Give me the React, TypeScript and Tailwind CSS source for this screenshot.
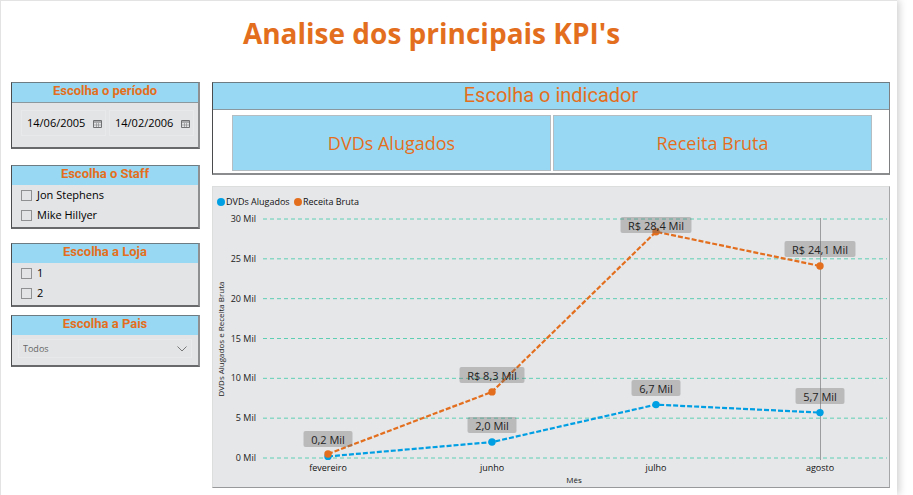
import { useState } from "react";
import type { ReactNode } from "react";

const MONTHS = ["fevereiro", "junho", "julho", "agosto"];
const MONTH_X = [115, 279, 443, 607];
const PLOT = { left: 50, right: 674, top: 32, bottom: 271, max: 30 };

type Label = { text: string; y: number; width: number } | null;
type Series = { name: string; color: string; values: number[]; labels: Label[] };

const SERIES: Series[] = [
  {
    name: "DVDs Alugados",
    color: "#009fe3",
    values: [0.2, 2.0, 6.7, 5.7],
    labels: [
      { text: "0,2 Mil", y: 244, width: 49 },
      { text: "2,0 Mil", y: 230, width: 49 },
      { text: "6,7 Mil", y: 193, width: 49 },
      { text: "5,7 Mil", y: 201, width: 49 },
    ],
  },
  {
    name: "Receita Bruta",
    color: "#e36f1e",
    values: [0.5, 8.3, 28.4, 24.1],
    labels: [
      null,
      { text: "R$ 8,3 Mil", y: 180, width: 65 },
      { text: "R$ 28,4 Mil", y: 30, width: 71 },
      { text: "R$ 24,1 Mil", y: 54, width: 71 },
    ],
  },
];

const TICKS = [0, 5, 10, 15, 20, 25, 30];

function yOf(value: number) {
  return PLOT.bottom - (value / PLOT.max) * (PLOT.bottom - PLOT.top);
}

function Card({ title, ruled, children }: { title: string; ruled?: boolean; children: ReactNode }) {
  return (
    <section className="border-2 border-t border-l border-t-[#6d7c83] border-r-[#8d8f90] border-b-[#68696a] border-l-[#4a4b4c] bg-[#e3e4e5]">
      <h2
        className={`bg-[#99d8f3] text-center font-['Roboto',sans-serif] text-[13px] leading-4 font-bold text-[#e36f1e] ${
          ruled ? "h-5 border-b border-[#8b989e]" : "h-[19px]"
        }`}
      >
        {title}
      </h2>
      {children}
    </section>
  );
}

function CalendarIcon() {
  return (
    <svg viewBox="0 0 9 9" className="size-[9px] shrink-0" fill="none" stroke="#6f7173" aria-hidden="true">
      <path d="M.5 1.5h8v7h-8z" />
      <path d="M0 3h9" />
      <path d="M3.500 4v4M5.500 4v4M1 6h7" strokeWidth=".5" />
    </svg>
  );
}

function DateField({ label, initial }: { label: string; initial: string }) {
  const [value, setValue] = useState(initial);
  return (
    <label className="flex h-[26px] min-w-0 flex-1 items-center border border-[#e8e9ea] pr-[3px] pl-[5px]">
      <input
        aria-label={label}
        value={value}
        onChange={(e) => setValue(e.target.value)}
        className="w-full min-w-0 bg-transparent text-[11px] text-black outline-none"
      />
      <CalendarIcon />
    </label>
  );
}

function CheckList({ items }: { items: string[] }) {
  return (
    <ul className="flex flex-col px-[9px] pb-0.5">
      {items.map((item) => (
        <li key={item}>
          <label className="flex h-5 items-center gap-[5px] text-[11px] text-black">
            <input
              type="checkbox"
              className="size-[11px] shrink-0 appearance-none border border-[#8f9091] checked:bg-[#6f7173]"
            />
            {item}
          </label>
        </li>
      ))}
    </ul>
  );
}

function Chart() {
  return (
    <svg viewBox="0 0 676 300" className="block w-full" role="img" aria-label="DVDs Alugados e Receita Bruta por Mês">
      {SERIES.map((s, i) => (
        <g key={s.name}>
          <circle cx={i === 0 ? 8 : 85} cy="15" r="4" fill={s.color} />
          <text x={i === 0 ? 13 : 90} y="18" fontSize="9" fill="#111">
            {s.name}
          </text>
        </g>
      ))}
      {TICKS.map((t) => (
        <g key={t}>
          <line
            x1={PLOT.left}
            x2={PLOT.right}
            y1={yOf(t)}
            y2={yOf(t)}
            stroke="#5fcfb4"
            strokeDasharray="4 3"
          />
          <text x="43" y={yOf(t) + 3} textAnchor="end" fontSize="9" fill="#222">
            {t} Mil
          </text>
        </g>
      ))}
      {MONTHS.map((m, i) => (
        <text key={m} x={MONTH_X[i]} y="284" textAnchor="middle" fontSize="9" fill="#111">
          {m}
        </text>
      ))}
      <text x="361" y="296" textAnchor="middle" fontSize="8" fill="#222">
        Mês
      </text>
      <text transform="translate(11 152) rotate(-90)" textAnchor="middle" fontSize="8" fill="#222">
        DVDs Alugados e Receita Bruta
      </text>
      <line x1="607.5" x2="607.5" y1="31" y2="273" stroke="#9c9d9e" />
      {SERIES.map((s) => (
        <g key={s.name}>
          <polyline
            points={s.values.map((v, i) => `${MONTH_X[i]},${yOf(v)}`).join(" ")}
            fill="none"
            stroke={s.color}
            strokeWidth="2.2"
            strokeDasharray="5 2"
          />
          {s.values.map((v, i) => (
            <circle key={i} cx={MONTH_X[i]} cy={yOf(v)} r="3.7" fill={s.color} />
          ))}
        </g>
      ))}
      {SERIES.map((s) =>
        s.labels.map(
          (l, i) =>
            l && (
              <g key={l.text}>
                <rect
                  x={MONTH_X[i] - l.width / 2}
                  y={l.y}
                  width={l.width}
                  height="16"
                  rx="2"
                  fill="#666"
                  fillOpacity=".35"
                />
                <text x={MONTH_X[i]} y={l.y + 13} textAnchor="middle" fontSize="11" fill="#222">
                  {l.text}
                </text>
              </g>
            ),
        ),
      )}
    </svg>
  );
}

export default function App() {
  return (
    <div className="min-h-screen overflow-hidden bg-white pr-4 font-['Open_Sans','Noto_Sans',sans-serif]">
      <main className="min-h-screen border-t border-l border-[#e3e3e3] bg-white pr-[7px] pl-2.5 shadow-[2px_0_8px_rgba(0,0,0,0.2)]">
        <h1 className="h-[81px] pt-3 pr-[38px] text-center text-[28px] leading-10 font-bold text-[#e36f1e]">
          Analise dos principais KPI's
        </h1>
        <div className="flex items-start gap-3">
          <aside className="flex w-[189px] shrink-0 flex-col">
            <Card title="Escolha o período" ruled>
              <div className="flex gap-[3px] pt-[7px] pr-1 pb-[11px] pl-[9px]">
                <DateField label="Data inicial" initial="14/06/2005" />
                <DateField label="Data final" initial="14/02/2006" />
              </div>
            </Card>
            <div className="mt-4">
              <Card title="Escolha o Staff">
                <CheckList items={["Jon Stephens", "Mike Hillyer"]} />
              </Card>
            </div>
            <div className="mt-3.5">
              <Card title="Escolha a Loja">
                <CheckList items={["1", "2"]} />
              </Card>
            </div>
            <div className="mt-2">
              <Card title="Escolha a Pais">
                <div className="px-1.5 pt-1 pb-[7px]">
                  <div className="grid h-[19px] items-center border border-[#e8e9ea]">
                    <select
                      aria-label="Escolha a Pais"
                      className="col-start-1 row-start-1 w-full appearance-none bg-transparent pl-1 text-[9px] text-[#666] outline-none"
                    >
                      <option>Todos</option>
                    </select>
                    <svg
                      viewBox="0 0 10 6"
                      className="pointer-events-none col-start-1 row-start-1 mr-1 h-1.5 w-2.5 justify-self-end"
                      fill="none"
                      stroke="#777"
                      aria-hidden="true"
                    >
                      <path d="M.5 .5L5 5L9.500 .5" />
                    </svg>
                  </div>
                </div>
              </Card>
            </div>
          </aside>
          <div className="flex min-w-0 flex-1 flex-col gap-[11px]">
            <section className="border border-b-2 border-t-[#6d7c83] border-r-[#7d7f80] border-b-[#8b8c8d] border-l-[#4a4b4c]">
              <h2 className="h-[27px] border-b border-[#8b989e] bg-[#99d8f3] text-center font-['Roboto',sans-serif] text-xl leading-6 text-[#e36f1e]">
                Escolha o indicador
              </h2>
              <div className="grid grid-cols-2 gap-0.5 pt-[5px] pr-[17px] pb-0.5 pl-[19px]">
                {["DVDs Alugados", "Receita Bruta"].map((name) => (
                  <button
                    key={name}
                    type="button"
                    className="h-14 border border-[#b3bdc2] bg-[#99d8f3] text-lg text-[#e36f1e]"
                  >
                    {name}
                  </button>
                ))}
              </div>
            </section>
            <section className="border border-t-[#dcdddd] border-r-[#a5a6a7] border-b-[#98999a] border-l-[#dcdddd] bg-[#e6e7e9]">
              <Chart />
            </section>
          </div>
        </div>
      </main>
    </div>
  );
}
